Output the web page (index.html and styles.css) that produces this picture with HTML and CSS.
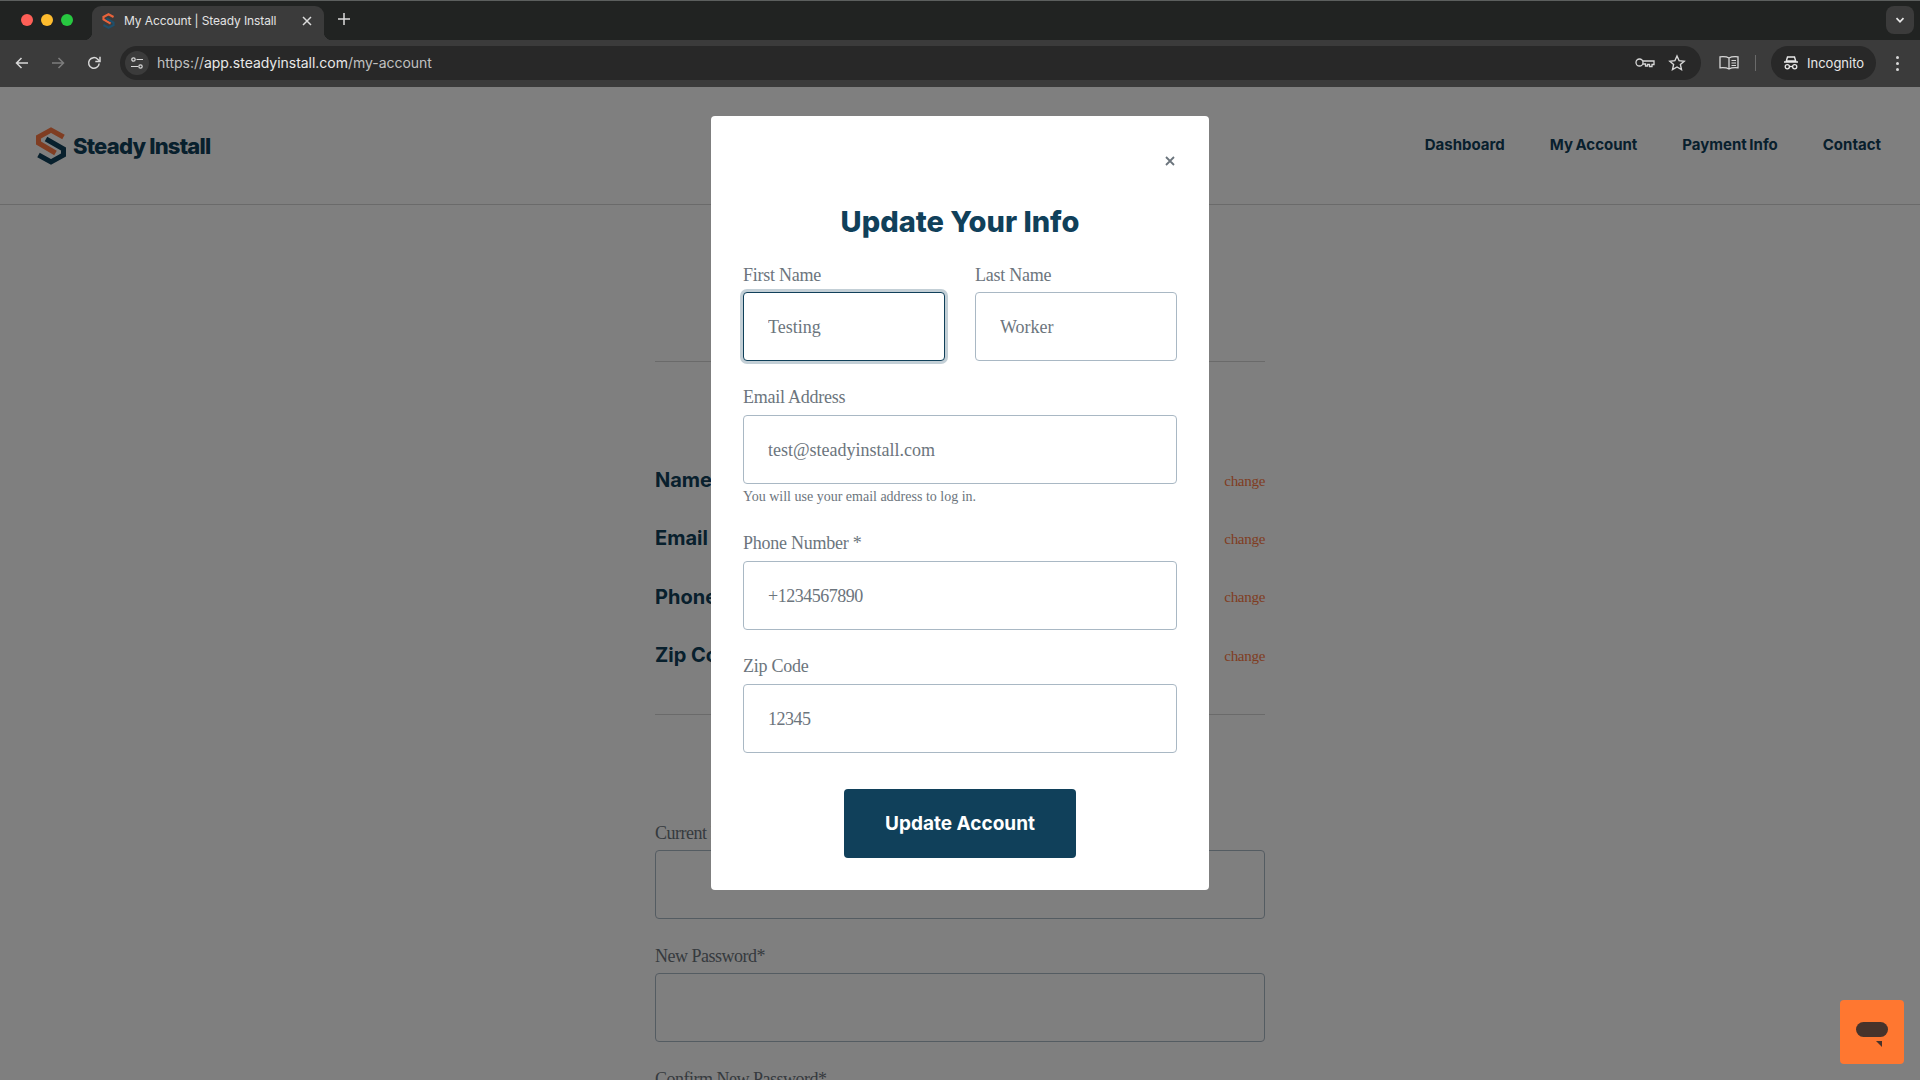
FILE: index.html
```html
<!DOCTYPE html>
<html lang="en">
<head>
    <meta charset="UTF-8">
    <meta name="viewport" content="width=device-width, initial-scale=1.0">
    <title>My Account | Steady Install</title>
    <link rel="stylesheet" href="styles.css">
</head>
<body>
    <div class="browser">
        <!-- Tab strip -->
        <div class="tab-strip">
            <div class="traffic-lights">
                <span class="light light-red"></span>
                <span class="light light-yellow"></span>
                <span class="light light-green"></span>
            </div>
            <div class="tab">
                <svg class="favicon" viewBox="0 0 30 38" width="13" height="16">
                    <path d="M27 9.500 15 3 3 9.500V15l17 10" fill="none" stroke="#e8623a" stroke-width="5"/>
                    <path d="M3 28.500 15 35l12-6.500V23L10 13" fill="none" stroke="#1f4f6b" stroke-width="5"/>
                </svg>
                <span class="tab-title">My Account | Steady Install</span>
                <svg class="tab-close" viewBox="0 0 12 12" width="12" height="12">
                    <path d="M2 2l8 8M10 2l-8 8" stroke="#dcdcdc" stroke-width="1.500" fill="none"/>
                </svg>
            </div>
            <svg class="new-tab" viewBox="0 0 14 14" width="14" height="14">
                <path d="M7 1v12M1 7h12" stroke="#dcdcdc" stroke-width="1.500" fill="none"/>
            </svg>
            <div class="tab-search">
                <svg viewBox="0 0 12 12" width="12" height="12">
                    <path d="M2.500 4.200 6 7.800l3.500-3.600" stroke="#e8e8e8" stroke-width="1.700" fill="none"/>
                </svg>
            </div>
        </div>

        <!-- Toolbar -->
        <div class="toolbar">
            <svg class="nav-icon" viewBox="0 0 16 16" width="16" height="16">
                <path d="M14 8H3M7.500 3 2.500 8l5 5" stroke="#d8d8d8" stroke-width="1.500" fill="none"/>
            </svg>
            <svg class="nav-icon" viewBox="0 0 16 16" width="16" height="16">
                <path d="M2 8h11M8.500 3l5 5-5 5" stroke="#7d7d7d" stroke-width="1.500" fill="none"/>
            </svg>
            <svg class="nav-icon" viewBox="0 0 16 16" width="16" height="16">
                <path d="M13.200 8.500A5.300 5.300 0 1 1 11.700 4.200L13.500 6" stroke="#d8d8d8" stroke-width="1.500" fill="none"/>
                <path d="M14 1.800V6.500H9.300" stroke="#d8d8d8" stroke-width="1.500" fill="none"/>
            </svg>
            <div class="omnibox">
                <span class="site-info">
                    <svg viewBox="0 0 14 14" width="14" height="14">
                        <circle cx="3.500" cy="3.500" r="1.700" stroke="#d8d8d8" stroke-width="1.200" fill="none"/>
                        <path d="M6.500 3.500H13M1 10.500h7" stroke="#d8d8d8" stroke-width="1.200" fill="none"/>
                        <circle cx="10.500" cy="10.500" r="1.700" stroke="#d8d8d8" stroke-width="1.200" fill="none"/>
                    </svg>
                </span>
                <span class="url"><span class="url-dim">https://</span>app.steadyinstall.com<span class="url-dim">/my-account</span></span>
                <svg class="omni-key" viewBox="0 0 20 12" width="20" height="12">
                    <circle cx="4.500" cy="5.500" r="3.500" stroke="#d8d8d8" stroke-width="1.300" fill="none"/>
                    <path d="M8 4h11v3.500h-2v2h-2.500v-2H12.500v1.500H10.500V7H8" stroke="#d8d8d8" stroke-width="1.300" fill="none"/>
                </svg>
                <svg class="omni-star" viewBox="0 0 18 18" width="18" height="18">
                    <path d="M9 2l2.100 4.700 5.100.5-3.800 3.400 1.100 5L9 13l-4.500 2.600 1.100-5L1.800 7.200l5.100-.5z" stroke="#d8d8d8" stroke-width="1.400" fill="none"/>
                </svg>
            </div>
            <svg class="reader" viewBox="0 0 20 16" width="20" height="16">
                <path d="M10 3C8 1.700 4.500 1.500 1 1.800v11c3.500-.3 7 0 9 1.200 2-1.200 5.500-1.500 9-1.200v-11C15.500 1.500 12 1.700 10 3zM10 3v11" stroke="#d8d8d8" stroke-width="1.300" fill="none"/>
                <path d="M12.500 5.500H17M12.500 8H17M12.500 10.500H17" stroke="#d8d8d8" stroke-width="1.100" fill="none"/>
            </svg>
            <span class="toolbar-sep"></span>
            <div class="incognito">
                <svg viewBox="0 0 16 14" width="16" height="14">
                    <path d="M4.500 1h7l1.200 4H3.300zM1 6h14" stroke="#e8e8e8" stroke-width="1.400" fill="none"/>
                    <circle cx="4.300" cy="10.800" r="2.100" stroke="#e8e8e8" stroke-width="1.300" fill="none"/>
                    <circle cx="11.700" cy="10.800" r="2.100" stroke="#e8e8e8" stroke-width="1.300" fill="none"/>
                    <path d="M6.400 10.500h3.200" stroke="#e8e8e8" stroke-width="1.300"/>
                </svg>
                <span>Incognito</span>
            </div>
            <div class="kebab"><span></span><span></span><span></span></div>
        </div>

        <!-- Page -->
        <div class="page">
            <header class="site-header">
                <a class="logo">
                    <svg viewBox="0 0 30 38" width="30" height="38">
                        <path d="M27.500 10 15 3 2.500 10v6l17 10" fill="none" stroke="#ff7a45" stroke-width="5"/>
                        <path d="M2.500 28 15 35l12.500-7v-6L10 12" fill="none" stroke="#10405a" stroke-width="5"/>
                    </svg>
                    <span class="logo-text">Steady Install</span>
                </a>
                <nav class="site-nav">
                    <a>Dashboard</a>
                    <a>My Account</a>
                    <a>Payment Info</a>
                    <a>Contact</a>
                </nav>
            </header>

            <main class="account">
                <div class="info-list">
                    <div class="info-row"><span class="info-label">Name</span><a class="change">change</a></div>
                    <div class="info-row"><span class="info-label">Email</span><a class="change">change</a></div>
                    <div class="info-row"><span class="info-label">Phone</span><a class="change">change</a></div>
                    <div class="info-row"><span class="info-label">Zip Code</span><a class="change">change</a></div>
                </div>
                <div class="password-form">
                    <label class="field-label">Current Password*</label>
                    <div class="bg-input"></div>
                    <label class="field-label">New Password*</label>
                    <div class="bg-input"></div>
                    <label class="field-label">Confirm New Password*</label>
                </div>
            </main>

            <div class="overlay">
                <div class="modal">
                    <div class="modal-top">
                        <svg class="modal-close" viewBox="0 0 12 12" width="12" height="12">
                            <path d="M2 2l8 8M10 2l-8 8" stroke="#6b747c" stroke-width="1.800" fill="none"/>
                        </svg>
                    </div>
                    <h2 class="modal-title">Update Your Info</h2>
                    <div class="name-row">
                        <div class="form-group">
                            <label>First Name</label>
                            <input class="is-focused" type="text" value="Testing">
                        </div>
                        <div class="form-group">
                            <label>Last Name</label>
                            <input type="text" value="Worker">
                        </div>
                    </div>
                    <div class="form-group">
                        <label>Email Address</label>
                        <input type="text" value="test@steadyinstall.com">
                        <div class="help-text">You will use your email address to log in.</div>
                    </div>
                    <div class="form-group">
                        <label>Phone Number *</label>
                        <input class="is-numeric" type="text" value="+1234567890">
                    </div>
                    <div class="form-group">
                        <label>Zip Code</label>
                        <input class="is-numeric" type="text" value="12345">
                    </div>
                    <div class="modal-actions">
                        <button class="submit-button">Update Account</button>
                    </div>
                </div>
            </div>

            <div class="chat-launcher">
                <span class="chat-bubble"></span>
                <span class="chat-tail"></span>
            </div>
        </div>
    </div>
</body>
</html>
```
FILE: styles.css
```css
* {
    margin: 0;
    padding: 0;
    box-sizing: border-box;
}

html, body {
    height: 100%;
    overflow: hidden;
}

body {
    font-family: "Liberation Serif", serif;
    background-color: #fff;
    color: #10405a;
}

.browser {
    height: 1080px;
    display: flex;
    flex-direction: column;
}

/* Tab strip */
.tab-strip {
    height: 40px;
    background: #212322;
    border-top: 1px solid #5c5f5e;
    display: flex;
    align-items: flex-start;
    padding-top: 5px;
    flex-shrink: 0;
}

.traffic-lights {
    width: 92px;
    padding: 8px 0 0 21px;
    display: flex;
    gap: 8px;
}

.light {
    width: 12px;
    height: 12px;
    border-radius: 50%;
}

.light-red { background: #fe5f57; }
.light-yellow { background: #febc2e; }
.light-green { background: #27c840; }

.tab {
    position: relative;
    width: 232px;
    height: 34px;
    background: #3b3b3b;
    border-radius: 9px 9px 0 0;
    display: flex;
    align-items: center;
    padding: 0 11px 5px 10px;
    color: #e3e3e3;
    font-family: Inter, sans-serif;
    font-size: 12px;
    letter-spacing: -0.1px;
}

.tab::before,
.tab::after {
    content: "";
    position: absolute;
    bottom: 0;
    width: 8px;
    height: 8px;
}

.tab::before {
    left: -8px;
    background: radial-gradient(circle at 0 0, transparent 8px, #3b3b3b 8.500px);
}

.tab::after {
    right: -8px;
    background: radial-gradient(circle at 100% 0, transparent 8px, #3b3b3b 8.500px);
}

.favicon {
    flex-shrink: 0;
}

.tab-title {
    flex-grow: 1;
    margin-left: 9px;
}

.new-tab {
    margin: 6px 0 0 13px;
}

.tab-search {
    margin-left: auto;
    margin-right: 6px;
    width: 28px;
    height: 28px;
    background: #3b3b3b;
    border-radius: 8px;
    display: flex;
    align-items: center;
    justify-content: center;
}

/* Toolbar */
.toolbar {
    height: 47px;
    background: #3b3b3b;
    display: flex;
    align-items: center;
    padding: 0 0 1px 14px;
    flex-shrink: 0;
}

.nav-icon {
    margin-right: 20px;
}

.omnibox {
    width: 1581px;
    height: 34px;
    margin-left: -2px;
    background: #282828;
    border-radius: 17px;
    display: flex;
    align-items: center;
    padding: 0 15px 0 5px;
    font-family: Inter, sans-serif;
    font-size: 14px;
    letter-spacing: -0.03px;
    color: #e8e8e8;
}

.site-info {
    width: 24px;
    height: 24px;
    border-radius: 50%;
    background: #3b3b3b;
    display: flex;
    align-items: center;
    justify-content: center;
}

.url {
    flex-grow: 1;
    margin: -2px 0 0 8px;
}

.url-dim {
    color: #c0c0c0;
}

.omni-star {
    margin-left: 13px;
}

.reader {
    margin-left: 18px;
}

.toolbar-sep {
    width: 1px;
    height: 16px;
    background: #6a6a6a;
    margin: 0 15px 0 16px;
}

.incognito {
    width: 105px;
    height: 34px;
    background: #282828;
    border-radius: 17px;
    display: flex;
    align-items: center;
    gap: 8px;
    padding-left: 12px;
    font-family: Inter, sans-serif;
    font-size: 13px;
    color: #e8e8e8;
}

.kebab {
    margin-left: 20px;
    display: flex;
    flex-direction: column;
    gap: 3px;
}

.kebab span {
    width: 3px;
    height: 3px;
    border-radius: 50%;
    background: #d8d8d8;
}

/* Page behind the dialog */
.page {
    position: relative;
    flex-grow: 1;
    overflow: hidden;
}

.site-header {
    height: 118px;
    border-bottom: 1px solid #d4d4d4;
    display: flex;
    align-items: center;
    justify-content: space-between;
    padding: 0 39px 0 36px;
}

.logo {
    display: flex;
    align-items: center;
    gap: 7px;
}

.logo-text {
    font-family: Inter, sans-serif;
    font-weight: 800;
    font-size: 22px;
    letter-spacing: -0.8px;
    color: #10405a;
}

.site-nav {
    display: flex;
    gap: 45px;
    padding-bottom: 2px;
}

.site-nav a {
    font-family: Inter, sans-serif;
    font-weight: 700;
    font-size: 15px;
    word-spacing: -1px;
    color: #10405a;
}

.account {
    width: 610px;
    margin: 156px auto 0;
}

.info-list {
    border-top: 1px solid #d4d4d4;
    border-bottom: 1px solid #d4d4d4;
    padding: 90px 0 30px;
    height: 354px;
}

.info-row {
    height: 58.300px;
    display: flex;
    align-items: center;
    justify-content: space-between;
}

.info-label {
    font-family: Inter, sans-serif;
    font-weight: 700;
    font-size: 20px;
    margin-top: -2px;
    color: #10405a;
}

.change {
    font-size: 15px;
    letter-spacing: -0.3px;
    color: #ff7a45;
}

.password-form {
    padding-top: 106px;
}

.field-label {
    display: block;
    height: 24px;
    line-height: 24px;
    font-size: 18px;
    letter-spacing: -0.5px;
    color: #6c757d;
    margin-bottom: 5px;
}

.bg-input {
    height: 69px;
    border: 1px solid #a9b8c4;
    border-radius: 4px;
    margin-bottom: 25px;
}

/* Dialog */
.overlay {
    position: absolute;
    inset: 0;
    background: rgba(0, 0, 0, 0.5);
}

.modal {
    width: 498px;
    height: 774px;
    margin: 29px auto 0;
    background: #fff;
    border-radius: 4px;
    padding: 32px;
}

.modal-top {
    height: 24px;
    display: flex;
    align-items: center;
    justify-content: flex-end;
    padding: 1px 1px 0 0;
}

.modal-title {
    font-family: Inter, sans-serif;
    font-weight: 800;
    font-size: 29px;
    line-height: 45px;
    text-align: center;
    color: #10405a;
    margin: 27px 0 19px;
}

.name-row {
    display: grid;
    grid-template-columns: 202px 202px;
    gap: 30px;
}

.form-group {
    margin-bottom: 24px;
}

.form-group label {
    display: block;
    height: 24px;
    line-height: 24px;
    font-size: 18px;
    letter-spacing: -0.25px;
    color: #6c757d;
    margin-bottom: 6px;
}

.name-row .form-group label {
    margin-bottom: 5px;
}

.form-group input {
    display: block;
    width: 100%;
    height: 69px;
    border: 1px solid #a9b8c4;
    border-radius: 4px;
    padding: 2px 24px 0;
    font-family: "Liberation Serif", serif;
    font-size: 18px;
    color: #6c757d;
    background: #fff;
    outline: none;
}

.form-group input.is-focused {
    border-color: #10405a;
    box-shadow: 0 0 0 3px rgba(16, 64, 90, 0.25);
}

.form-group input.is-numeric {
    letter-spacing: -0.5px;
}

.help-text {
    height: 23px;
    padding-top: 5px;
    font-size: 14px;
    color: #6c757d;
}

.modal-actions {
    display: flex;
    justify-content: center;
    margin-top: 36px;
}

.submit-button {
    width: 232px;
    height: 69px;
    background: #10405a;
    color: #fff;
    border: none;
    border-radius: 4px;
    font-family: Inter, sans-serif;
    font-weight: 700;
    font-size: 19px;
}

/* Chat launcher */
.chat-launcher {
    position: absolute;
    right: 16px;
    bottom: 16px;
    width: 64px;
    height: 64px;
    background: #ff7730;
    border-radius: 4px;
}

.chat-bubble {
    position: absolute;
    left: 16px;
    top: 22px;
    width: 32px;
    height: 15px;
    border-radius: 8px;
    background: #47332b;
}

.chat-tail {
    position: absolute;
    left: 36px;
    top: 41px;
    width: 0;
    height: 0;
    border-left: 6px solid transparent;
    border-top: 6px solid #47332b;
}
```
